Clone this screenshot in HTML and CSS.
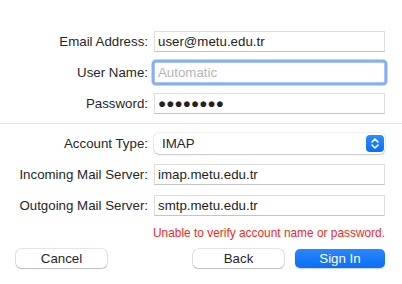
FILE: index.html
```
<!DOCTYPE html>
<html lang="en">

<head>
    <meta charset="UTF-8">
    <meta name="viewport" content="width=device-width, initial-scale=1.0">
    <title>Add Account</title>
<link rel="stylesheet" href="styles.css">
</head>

<body>
    <div class="sheet">
        <div class="form">
            <label class="form-label">Email Address:</label>
            <div class="field">user@metu.edu.tr</div>

            <label class="form-label">User Name:</label>
            <div class="field field-focus placeholder">Automatic</div>

            <label class="form-label">Password:</label>
            <div class="field password">&#9679;&#9679;&#9679;&#9679;&#9679;&#9679;&#9679;&#9679;</div>
        </div>

        <div class="divider"></div>

        <div class="form">
            <label class="form-label">Account Type:</label>
            <div class="popup">
                <span class="popup-value">IMAP</span>
                <span class="popup-stepper">
                    <svg width="10" height="13" viewBox="0 0 10 13">
                        <path d="M2 5 L5 2 L8 5" fill="none" stroke="#fff" stroke-width="1.6" stroke-linecap="round" stroke-linejoin="round"/>
                        <path d="M2 8 L5 11 L8 8" fill="none" stroke="#fff" stroke-width="1.6" stroke-linecap="round" stroke-linejoin="round"/>
                    </svg>
                </span>
            </div>

            <label class="form-label">Incoming Mail Server:</label>
            <div class="field">imap.metu.edu.tr</div>

            <label class="form-label">Outgoing Mail Server:</label>
            <div class="field">smtp.metu.edu.tr</div>
        </div>

        <p class="error">Unable to verify account name or password.</p>

        <div class="actions">
            <button class="btn">Cancel</button>
            <div class="actions-right">
                <button class="btn">Back</button>
                <button class="btn btn-primary">Sign In</button>
            </div>
        </div>
    </div>
</body>

</html>
```

FILE: styles.css
```
body {
  margin: 0;
  background-color: #fff;
  font-family: "Liberation Sans", Arial, sans-serif;
  font-size: 13.3px;
  color: #262626;
}

.sheet {
  width: 402px;
  height: 284px;
  padding-top: 31px;
  box-sizing: border-box;
}

.form {
  display: grid;
  grid-template-columns: 148px 231px;
  grid-auto-rows: 21px;
  column-gap: 6px;
  row-gap: 10px;
}

.form-label {
  display: flex;
  align-items: center;
  justify-content: flex-end;
  white-space: nowrap;
}

.field {
  display: flex;
  align-items: center;
  padding: 0 3px;
  border: 1px solid #dedede;
  border-bottom-color: #c4c4c4;
  background-color: #fff;
  color: #1e1e1e;
  white-space: nowrap;
}

.field-focus {
  border-color: #a9c4f2;
  border-radius: 2px;
  box-shadow: 0 0 0 2.5px rgba(95, 150, 240, 0.75);
}

.placeholder {
  color: #b5b5b5;
}

.password {
  font-size: 13.5px;
  letter-spacing: 0.1px;
  color: #222;
}

.divider {
  height: 1px;
  margin: 9px 0 9px;
  background-color: #e3e3e3;
}

.popup {
  display: flex;
  align-items: center;
  justify-content: space-between;
  padding: 0 1px 0 8px;
  border-radius: 5px;
  background-color: #fff;
  box-shadow: 0 0 0 0.5px rgba(0, 0, 0, 0.12), 0 1px 1.5px rgba(0, 0, 0, 0.18);
}

.popup-stepper {
  display: flex;
  align-items: center;
  justify-content: center;
  width: 18px;
  height: 17px;
  border-radius: 4px;
  background: linear-gradient(#2d8cff, #0a6ff3);
}

.error {
  margin: 9px 17px 0 0;
  line-height: 16px;
  font-size: 11.9px;
  color: #ee2a1e;
  text-align: right;
}

.actions {
  display: flex;
  justify-content: space-between;
  margin-top: 8px;
  padding: 0 17px 0 16px;
}

.actions-right {
  display: flex;
  gap: 11px;
}

.btn {
  width: 91px;
  height: 19px;
  padding: 0;
  border: none;
  border-radius: 5px;
  background-color: #fff;
  box-shadow: 0 0 0 0.5px rgba(0, 0, 0, 0.2), 0 1px 1.5px rgba(0, 0, 0, 0.18);
  font-family: "Liberation Sans", Arial, sans-serif;
  font-size: 13.3px;
  color: #262626;
}

.btn-primary {
  width: 90px;
  background: linear-gradient(#2a86fb, #0a6ef5);
  box-shadow: 0 1px 1.5px rgba(0, 0, 0, 0.2);
  color: #fff;
}
```
